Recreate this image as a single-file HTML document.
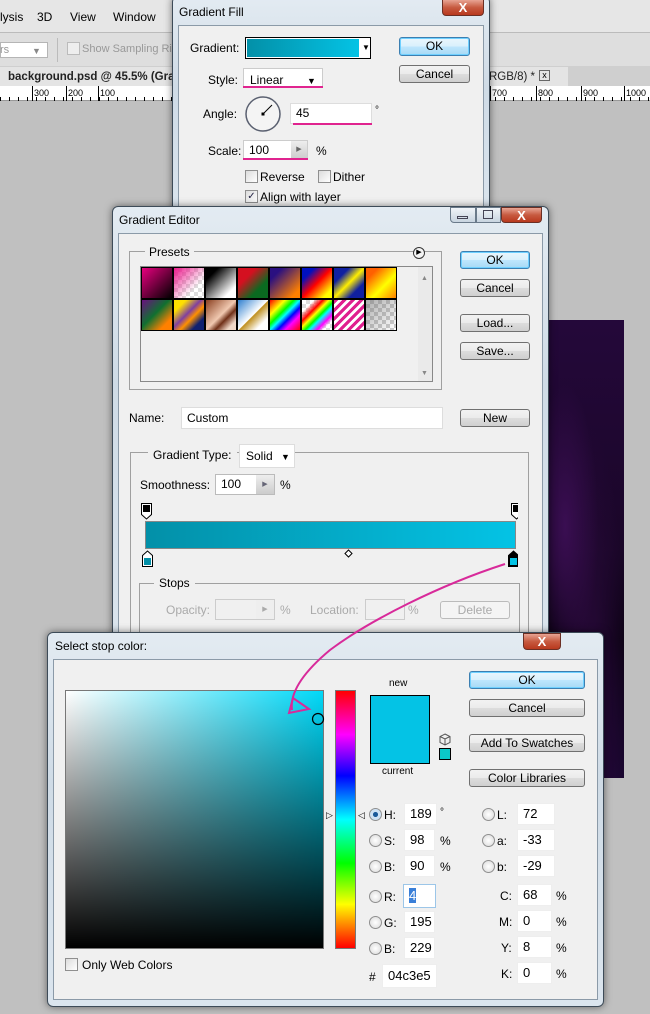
<!DOCTYPE html>
<html><head><meta charset="utf-8"><style>
*{box-sizing:border-box;margin:0;padding:0}
body{width:650px;height:1014px;overflow:hidden;background:#c0c0c0;font-family:"Liberation Sans",sans-serif;font-size:12px;color:#000;position:relative}
.a{position:absolute}
.t{position:absolute;white-space:nowrap;line-height:14px}
.win{position:absolute;background:linear-gradient(180deg,#e3ebf2,#cfdbe6 40%,#dbe5ee);border:1px solid #3d4b58;border-radius:6px 6px 0 0;box-shadow:0 0 8px rgba(0,0,0,.5)}
.inner{position:absolute;background:#f0f0f0;border:1px solid #8b9aa8}
.btn{position:absolute;border:1px solid #707070;border-radius:3px;background:linear-gradient(#f2f2f2,#ebebeb 50%,#dddddd 51%,#cfcfcf);text-align:center;line-height:16px;font-size:12px}
.btn.d{border:1px solid #3c7fb1;background:linear-gradient(#eaf6fd,#d9f0fc 50%,#bee6fd 51%,#a7d9f5);box-shadow:inset 0 0 0 1px #6fd0ff}
.inp{position:absolute;background:#fff;border:1px solid #abadb3;padding-left:5px;line-height:18px}
.cb{position:absolute;width:13px;height:13px;border:1px solid #8f8f8f;background:linear-gradient(135deg,#dcdcdc,#fff)}
.grp{position:absolute;border:1px solid #a0a0a0}
.rad{position:absolute;width:13px;height:13px;border-radius:50%;border:1px solid #8f8f8f;background:radial-gradient(#fff,#d8d8d8)}
.close{position:absolute;height:17px;border:1px solid #6b2f24;border-radius:0 0 4px 4px;background:linear-gradient(#e8a493,#c75a40 50%,#b8391e);color:#fff;font-weight:bold;text-align:center;line-height:15px;font-size:13px}
.sw{position:absolute;width:32px;height:32px;border:1px solid #000}
</style></head><body>
<!-- Photoshop background chrome -->
<div class="a" style="left:0;top:0;width:650px;height:33px;background:#e6e6e6;border-bottom:1px solid #bbb"></div>
<div class="t" style="left:0;top:10px;font-size:12px">lysis</div>
<div class="t" style="left:37px;top:10px">3D</div>
<div class="t" style="left:70px;top:10px">View</div>
<div class="t" style="left:113px;top:10px">Window</div>
<div class="a" style="left:0;top:33px;width:650px;height:33px;background:#dedede"></div>
<div class="a" style="left:0;top:42px;width:48px;height:16px;background:#fff;border:1px solid #b5b5b5"></div>
<div class="t" style="left:0;top:43px;color:#999;font-size:11px">rs</div>
<div class="t" style="left:32px;top:44px;color:#888;font-size:9px">▼</div>
<div class="a" style="left:57px;top:38px;width:1px;height:24px;background:#bbb"></div>
<div class="cb" style="left:67px;top:42px;background:#eee;border-color:#bbb"></div>
<div class="t" style="left:82px;top:42px;color:#999;font-size:11px">Show Sampling Rin</div>
<div class="a" style="left:0;top:66px;width:650px;height:20px;background:#cfcfcf"></div>
<div class="a" style="left:0;top:67px;width:175px;height:19px;background:#e4e4e4"></div>
<div class="t" style="left:8px;top:70px;font-size:11.5px;font-weight:bold;color:#222">background.psd @ 45.5% (Grad</div>
<div class="a" style="left:488px;top:67px;width:80px;height:19px;background:#e4e4e4"></div>
<div class="t" style="left:489px;top:70px;font-size:11.5px;color:#222">RGB/8) *</div>
<div class="a" style="left:539px;top:70px;width:11px;height:11px;border:1px solid #666;font-size:9px;line-height:9px;text-align:center">x</div>
<div class="a" style="left:0;top:86px;width:650px;height:15px;background:#fff;border-bottom:1px solid #999"></div>
<div class="a" style="left:0;top:86px;width:650px;height:15px;background:repeating-linear-gradient(90deg,#000 0 1px,transparent 1px 9px);-webkit-mask:linear-gradient(transparent 11px,#000 11px);mask:linear-gradient(transparent 11px,#000 11px)"></div>
<div class="t" style="left:32px;top:86px;font-size:9px;border-left:1px solid #000;padding-left:1px;height:15px">300</div>
<div class="t" style="left:66px;top:86px;font-size:9px;border-left:1px solid #000;padding-left:1px;height:15px">200</div>
<div class="t" style="left:98px;top:86px;font-size:9px;border-left:1px solid #000;padding-left:1px;height:15px">100</div>
<div class="t" style="left:490px;top:86px;font-size:9px;border-left:1px solid #000;padding-left:1px;height:15px">700</div>
<div class="t" style="left:536px;top:86px;font-size:9px;border-left:1px solid #000;padding-left:1px;height:15px">800</div>
<div class="t" style="left:581px;top:86px;font-size:9px;border-left:1px solid #000;padding-left:1px;height:15px">900</div>
<div class="t" style="left:624px;top:86px;font-size:9px;border-left:1px solid #000;padding-left:1px;height:15px">1000</div>
<!-- purple image -->
<div class="a" style="left:540px;top:320px;width:84px;height:458px;background:radial-gradient(ellipse at 30% 45%,#3a0e52,transparent 40%),radial-gradient(ellipse at 60% 80%,#2a0a3c,transparent 50%),linear-gradient(#24083a,#1a0628 50%,#0c0214 70%,#1a0630)"></div>

<!-- Gradient Fill -->
<div class="win" style="left:172px;top:-4px;width:318px;height:225px"></div>
<div class="t" style="left:179px;top:5px;font-size:12px">Gradient Fill</div>
<div class="close" style="left:442px;top:-1px;width:42px">X</div>
<div class="inner" style="left:178px;top:25px;width:306px;height:196px"></div>
<div class="t" style="left:190px;top:41px">Gradient:</div>
<div class="a" style="left:245px;top:37px;width:126px;height:22px;border:1px solid #000;background:#fff"></div>
<div class="a" style="left:247px;top:39px;width:112px;height:18px;background:linear-gradient(90deg,#0390a8,#04c3e5)"></div>
<div class="t" style="left:362px;top:41px;font-size:8px">▼</div>
<div class="btn d" style="left:399px;top:37px;width:71px;height:19px">OK</div>
<div class="btn" style="left:399px;top:65px;width:71px;height:18px">Cancel</div>
<div class="t" style="left:208px;top:73px">Style:</div>
<div class="a" style="left:243px;top:68px;width:80px;height:20px;background:#fff;border:1px solid #ccc"></div>
<div class="t" style="left:250px;top:73px">Linear</div>
<div class="t" style="left:307px;top:74px;font-size:9px">▼</div>
<div class="a" style="left:243px;top:86px;width:80px;height:2px;background:#e0248f"></div>
<div class="t" style="left:203px;top:107px">Angle:</div>
<svg class="a" style="left:244px;top:95px" width="38" height="38"><circle cx="19" cy="19" r="17" fill="#f4f4f4" stroke="#5a6070" stroke-width="1.5"/><line x1="19" y1="19" x2="28" y2="10" stroke="#000"/><rect x="17.5" y="17.5" width="3" height="3"/></svg>
<div class="inp" style="left:290px;top:103px;width:82px;height:21px;border-color:#ddd">45</div>
<div class="a" style="left:293px;top:123px;width:79px;height:2px;background:#e0248f"></div>
<div class="t" style="left:375px;top:104px;font-size:10px">°</div>
<div class="t" style="left:208px;top:144px">Scale:</div>
<div class="inp" style="left:243px;top:140px;width:65px;height:20px;border-color:#ccc">100</div>
<div class="a" style="left:291px;top:141px;width:16px;height:18px;background:linear-gradient(#eee,#ccc);font-size:7px;line-height:18px;text-align:center;color:#666">▶</div>
<div class="a" style="left:243px;top:158px;width:65px;height:2px;background:#e0248f"></div>
<div class="t" style="left:316px;top:144px">%</div>
<div class="cb" style="left:245px;top:170px"></div><div class="t" style="left:260px;top:170px">Reverse</div>
<div class="cb" style="left:318px;top:170px"></div><div class="t" style="left:333px;top:170px">Dither</div>
<div class="cb" style="left:245px;top:190px;font-size:10px;line-height:11px;text-align:center;color:#224">✓</div><div class="t" style="left:260px;top:190px">Align with layer</div>

<!-- Gradient Editor -->
<div class="win" style="left:112px;top:206px;width:437px;height:440px"></div>
<div class="t" style="left:119px;top:213px">Gradient Editor</div>
<div class="a" style="left:450px;top:207px;width:26px;height:16px;border:1px solid #6a7a8a;border-radius:0 0 0 4px;background:linear-gradient(#f0f4f8,#c8d4e0)"></div>
<div class="a" style="left:457px;top:216px;width:11px;height:3px;border:1px solid #445"></div>
<div class="a" style="left:476px;top:207px;width:25px;height:16px;border:1px solid #6a7a8a;background:linear-gradient(#f0f4f8,#c8d4e0)"></div>
<div class="a" style="left:483px;top:210px;width:10px;height:9px;border:1px solid #445"></div>
<div class="close" style="left:501px;top:207px;width:41px;height:16px">X</div>
<div class="inner" style="left:118px;top:233px;width:425px;height:413px"></div>
<div class="grp" style="left:129px;top:251px;width:313px;height:139px"></div>
<div class="a t" style="left:145px;top:245px;background:#f0f0f0;padding:0 4px">Presets</div>
<div class="a" style="left:413px;top:247px;width:12px;height:12px;border-radius:50%;border:1px solid #333;background:#f4f4f4;font-size:7px;line-height:10px;text-align:center">▶</div>
<div class="a" style="left:140px;top:266px;width:293px;height:116px;border:1px solid #888;background:#f0f0f0"></div>
<div class="a" style="left:418px;top:267px;width:14px;height:114px;background:#eaeaea"></div>
<div class="t" style="left:421px;top:272px;font-size:7px;color:#888">▲</div>
<div class="t" style="left:421px;top:367px;font-size:7px;color:#888">▼</div>
<div class="sw" style="left:141px;top:267px;background:linear-gradient(135deg,#e8007f,#000)"></div>
<div class="sw" style="left:173px;top:267px;background:linear-gradient(135deg,#ec1a8c,transparent 70%),repeating-conic-gradient(#ddd 0 25%,#fff 0 50%) 0 0/8px 8px"></div>
<div class="sw" style="left:205px;top:267px;background:linear-gradient(135deg,#000 20%,#fff 80%)"></div>
<div class="sw" style="left:237px;top:267px;background:linear-gradient(135deg,#d41020 30%,#0a6a20 70%)"></div>
<div class="sw" style="left:269px;top:267px;background:linear-gradient(135deg,#2a1080 20%,#ff8000 85%)"></div>
<div class="sw" style="left:301px;top:267px;background:linear-gradient(135deg,#0010c0 20%,#ff0000 50%,#ffff00 85%)"></div>
<div class="sw" style="left:333px;top:267px;background:linear-gradient(135deg,#1020a0 25%,#ffee00 50%,#1020a0 75%)"></div>
<div class="sw" style="left:365px;top:267px;background:linear-gradient(135deg,#ff6000 20%,#ffff00 60%,#ff8000)"></div>
<div class="sw" style="left:141px;top:299px;background:linear-gradient(135deg,#6a1080,#107030 45%,#ff8000 80%)"></div>
<div class="sw" style="left:173px;top:299px;background:linear-gradient(135deg,#ffe000 20%,#8040a0 45%,#ff9000 60%,#102070 80%)"></div>
<div class="sw" style="left:205px;top:299px;background:linear-gradient(135deg,#8a4020,#f0c8b0 50%,#703018 65%,#f0d8c8 85%)"></div>
<div class="sw" style="left:237px;top:299px;background:linear-gradient(135deg,#3080d0,#fff 50%,#c09020 52%,#fff 80%)"></div>
<div class="sw" style="left:269px;top:299px;background:linear-gradient(135deg,#f00,#ff0 25%,#0f0 40%,#0ff 50%,#00f 62%,#f0f 75%,#f00)"></div>
<div class="sw" style="left:301px;top:299px;background:linear-gradient(135deg,transparent 20%,#f00 35%,#ff0 45%,#0f0 55%,#0ff 62%,#f0f 75%,transparent 85%),repeating-conic-gradient(#ddd 0 25%,#fff 0 50%) 0 0/8px 8px"></div>
<div class="sw" style="left:333px;top:299px;background:repeating-linear-gradient(135deg,#e0208f 0 3px,#fff 3px 6px)"></div>
<div class="sw" style="left:365px;top:299px;background:linear-gradient(135deg,rgba(120,120,120,.6),transparent),repeating-conic-gradient(#ccc 0 25%,#fff 0 50%) 0 0/8px 8px"></div>
<div class="btn d" style="left:460px;top:251px;width:70px;height:18px">OK</div>
<div class="btn" style="left:460px;top:279px;width:70px;height:18px">Cancel</div>
<div class="btn" style="left:460px;top:314px;width:70px;height:18px">Load...</div>
<div class="btn" style="left:460px;top:342px;width:70px;height:18px">Save...</div>
<div class="t" style="left:129px;top:411px">Name:</div>
<div class="inp" style="left:181px;top:407px;width:262px;height:22px;border-color:#ddd;line-height:20px">Custom</div>
<div class="btn" style="left:460px;top:409px;width:70px;height:18px">New</div>
<div class="grp" style="left:130px;top:452px;width:399px;height:200px"></div>
<div class="a t" style="left:148px;top:448px;background:#f0f0f0;padding:0 5px">Gradient Type:</div>
<div class="a" style="left:239px;top:444px;width:56px;height:24px;background:#fff;border:1px solid #ddd"></div>
<div class="t" style="left:246px;top:449px">Solid</div>
<div class="t" style="left:281px;top:450px;font-size:9px">▼</div>
<div class="t" style="left:140px;top:478px">Smoothness:</div>
<div class="inp" style="left:215px;top:474px;width:60px;height:21px;border-color:#bbb">100</div>
<div class="a" style="left:256px;top:475px;width:18px;height:19px;background:linear-gradient(#eee,#ccc);font-size:7px;line-height:19px;text-align:center;color:#667">▶</div>
<div class="t" style="left:280px;top:478px">%</div>
<svg class="a" style="left:138px;top:502px" width="380" height="68">
<g><path d="M3.5 1.5h10v11l-5 4.5-5-4.5z" fill="#fff" stroke="#000"/><rect x="5" y="3" width="7" height="7"/></g>
<g transform="translate(370 0)"><path d="M3.5 1.5h10v11l-5 4.5-5-4.5z" fill="#fff" stroke="#000"/><rect x="5" y="3" width="7" height="7"/></g>
<g transform="translate(1 48)"><path d="M3.5 5.5l5-4.5 5 4.5v11h-10z" fill="#fff" stroke="#000"/><rect x="5" y="8" width="7" height="7" fill="#0390a8"/></g>
<g transform="translate(367 48)"><path d="M3.5 5.5l5-4.5 5 4.5v11h-10z" fill="#000" stroke="#000"/><rect x="5" y="8" width="7" height="7" fill="#04c3e5"/></g>
<path d="M210.5 48l3.5 3.5-3.5 3.5-3.5-3.5z" fill="#fff" stroke="#000"/>
</svg>
<div class="a" style="left:145px;top:521px;width:371px;height:28px;border:1px solid #888;background:linear-gradient(90deg,#0390a8,#04c3e5)"></div>
<div class="grp" style="left:139px;top:583px;width:381px;height:80px"></div>
<div class="a t" style="left:154px;top:576px;background:#f0f0f0;padding:0 5px">Stops</div>
<div class="t" style="left:166px;top:603px;color:#aaa">Opacity:</div>
<div class="a" style="left:215px;top:599px;width:60px;height:21px;border:1px solid #ccc"></div>
<div class="a" style="left:256px;top:600px;width:18px;height:19px;background:#eee;font-size:7px;line-height:19px;text-align:center;color:#aaa">▶</div>
<div class="t" style="left:280px;top:603px;color:#aaa">%</div>
<div class="t" style="left:310px;top:603px;color:#aaa">Location:</div>
<div class="a" style="left:365px;top:599px;width:40px;height:21px;border:1px solid #ccc"></div>
<div class="t" style="left:408px;top:603px;color:#aaa">%</div>
<div class="btn" style="left:440px;top:601px;width:70px;height:18px;color:#aaa;border-color:#bbb;background:#f4f4f4">Delete</div>

<!-- Select stop color -->
<div class="win" style="left:47px;top:632px;width:557px;height:375px;border-radius:6px"></div>
<div class="t" style="left:55px;top:639px">Select stop color:</div>
<div class="close" style="left:523px;top:633px;width:38px">X</div>
<div class="inner" style="left:53px;top:659px;width:545px;height:341px"></div>
<div class="a" style="left:65px;top:690px;width:259px;height:259px;border:1px solid #777;background:linear-gradient(transparent,#000),linear-gradient(90deg,#fff,#00d8f8)"></div>
<svg class="a" style="left:311px;top:712px" width="14" height="14"><circle cx="7" cy="7" r="5.5" fill="none" stroke="#000" stroke-width="1.2"/></svg>
<div class="a" style="left:335px;top:690px;width:21px;height:259px;border:1px solid #777;background:linear-gradient(#f00,#f0f 17%,#00f 33%,#0ff 50%,#0f0 67%,#ff0 83%,#f00)"></div>
<div class="t" style="left:326px;top:808px;font-size:9px">▷</div>
<div class="t" style="left:358px;top:808px;font-size:9px">◁</div>
<div class="t" style="left:389px;top:677px;font-size:10px">new</div>
<div class="a" style="left:370px;top:695px;width:60px;height:69px;border:1px solid #000;background:#04c3e5"></div>
<div class="t" style="left:382px;top:765px;font-size:10px">current</div>
<svg class="a" style="left:439px;top:733px" width="12" height="13"><path d="M6 1l5 2.5v6L6 12 1 9.5v-6z M1 3.5L6 6l5-2.5 M6 6v6" fill="#eee" stroke="#555"/></svg>
<div class="a" style="left:439px;top:748px;width:12px;height:12px;border:1px solid #000;background:#0bc8c8"></div>
<div class="btn d" style="left:469px;top:671px;width:116px;height:18px">OK</div>
<div class="btn" style="left:469px;top:699px;width:116px;height:18px">Cancel</div>
<div class="btn" style="left:469px;top:734px;width:116px;height:18px">Add To Swatches</div>
<div class="btn" style="left:469px;top:769px;width:116px;height:18px">Color Libraries</div>

<div class="rad" style="left:369px;top:808px;background:radial-gradient(#1a5a9a 30%,#cfe2f4 35%)"></div><div class="t" style="left:384px;top:808px">H:</div><div class="inp" style="left:404px;top:803px;width:33px;height:22px;border-color:#eee;line-height:20px;font-size:13px">189</div><div class="t" style="left:440px;top:806px;font-size:10px">°</div>
<div class="rad" style="left:369px;top:834px"></div><div class="t" style="left:384px;top:834px">S:</div><div class="inp" style="left:404px;top:829px;width:31px;height:22px;border-color:#eee;line-height:20px;font-size:13px">98</div><div class="t" style="left:440px;top:834px">%</div>
<div class="rad" style="left:369px;top:860px"></div><div class="t" style="left:384px;top:860px">B:</div><div class="inp" style="left:404px;top:855px;width:31px;height:22px;border-color:#eee;line-height:20px;font-size:13px">90</div><div class="t" style="left:440px;top:860px">%</div>
<div class="rad" style="left:369px;top:890px"></div><div class="t" style="left:384px;top:890px">R:</div><div class="inp" style="left:403px;top:884px;width:33px;height:24px;border-color:#9cc6e8;line-height:22px;font-size:13px"><span style="background:#3a7fd8;color:#fff">4</span></div>
<div class="rad" style="left:369px;top:916px"></div><div class="t" style="left:384px;top:916px">G:</div><div class="inp" style="left:404px;top:911px;width:31px;height:22px;border-color:#eee;line-height:20px;font-size:13px">195</div>
<div class="rad" style="left:369px;top:942px"></div><div class="t" style="left:384px;top:942px">B:</div><div class="inp" style="left:404px;top:937px;width:31px;height:22px;border-color:#eee;line-height:20px;font-size:13px">229</div>
<div class="t" style="left:369px;top:970px">#</div><div class="inp" style="left:382px;top:964px;width:55px;height:24px;border-color:#eee;line-height:22px;font-size:13px">04c3e5</div>

<div class="rad" style="left:482px;top:808px"></div><div class="t" style="left:497px;top:808px">L:</div><div class="inp" style="left:517px;top:803px;width:38px;height:22px;border-color:#eee;line-height:20px;font-size:13px">72</div>
<div class="rad" style="left:482px;top:834px"></div><div class="t" style="left:497px;top:834px">a:</div><div class="inp" style="left:517px;top:829px;width:38px;height:22px;border-color:#eee;line-height:20px;font-size:13px">-33</div>
<div class="rad" style="left:482px;top:860px"></div><div class="t" style="left:497px;top:860px">b:</div><div class="inp" style="left:517px;top:855px;width:38px;height:22px;border-color:#eee;line-height:20px;font-size:13px">-29</div>
<div class="t" style="left:500px;top:889px">C:</div><div class="inp" style="left:517px;top:884px;width:35px;height:22px;border-color:#eee;line-height:20px;font-size:13px">68</div><div class="t" style="left:556px;top:889px">%</div>
<div class="t" style="left:499px;top:915px">M:</div><div class="inp" style="left:517px;top:910px;width:35px;height:22px;border-color:#eee;line-height:20px;font-size:13px">0</div><div class="t" style="left:556px;top:915px">%</div>
<div class="t" style="left:501px;top:941px">Y:</div><div class="inp" style="left:517px;top:936px;width:35px;height:22px;border-color:#eee;line-height:20px;font-size:13px">8</div><div class="t" style="left:556px;top:941px">%</div>
<div class="t" style="left:501px;top:967px">K:</div><div class="inp" style="left:517px;top:962px;width:35px;height:22px;border-color:#eee;line-height:20px;font-size:13px">0</div><div class="t" style="left:556px;top:967px">%</div>

<div class="cb" style="left:65px;top:958px"></div><div class="t" style="left:82px;top:958px">Only Web Colors</div>

<!-- pink arrow -->
<svg class="a" style="left:0;top:0" width="650" height="1014"><path d="M505 564C440 585 370 620 330 650 300 675 290 695 292 710" fill="none" stroke="#d82a9a" stroke-width="2"/><path d="M289 713l4-15 16 11z" fill="none" stroke="#d82a9a" stroke-width="2"/></svg>
</body></html>
